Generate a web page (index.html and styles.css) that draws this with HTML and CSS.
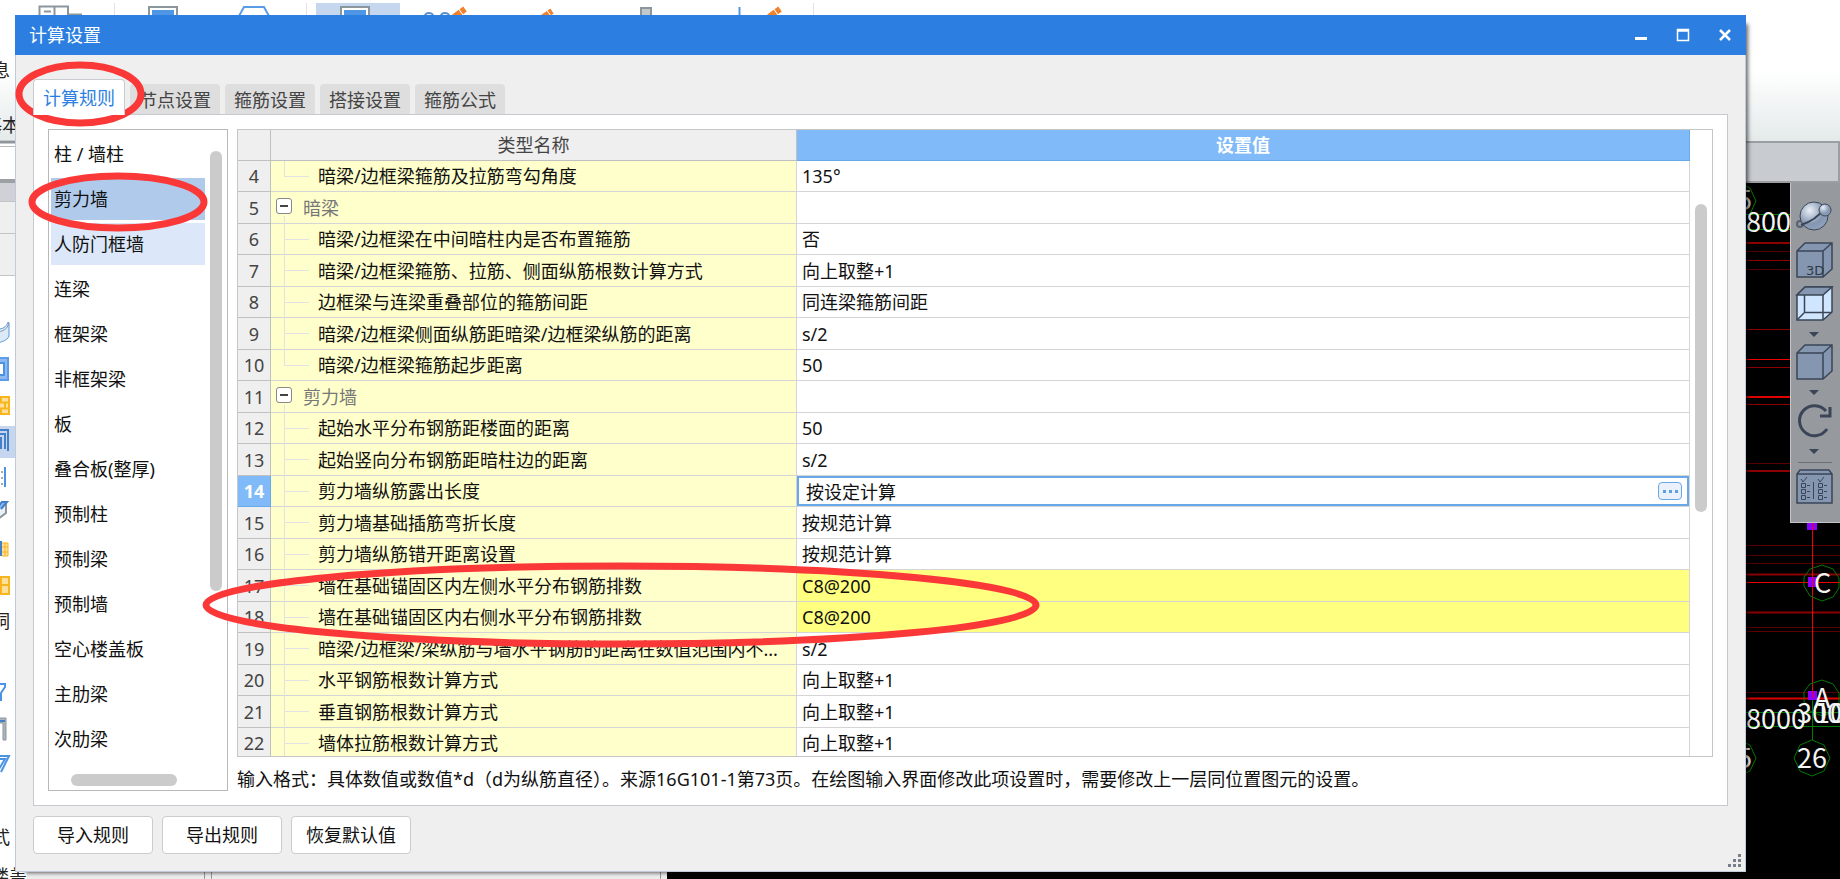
FILE: index.html
```html
<!DOCTYPE html>
<html lang="zh-CN">
<head>
<meta charset="utf-8">
<title>计算设置</title>
<link rel="stylesheet" href="styles.css">
</head>
<body>
<div class="app" aria-hidden="true">
  <div class="app-ribbon"></div>
  <div class="app-bar"></div>
  <div class="app-view"></div>
  <svg class="ribbon-icons" width="840" height="16" viewBox="0 0 840 16">
    <path d="M114.500 3V16M306.500 3V16M813.500 3V16" stroke="#e3e3e3"/>
    <rect x="316" y="3" width="84" height="13" fill="#c5d7ef"/>
    <path d="M39.500 16V6.500H68V16M68 14.500H82M44 11.500H51M54.500 7V16" fill="none" stroke="#8b979c" stroke-width="2"/>
    <path d="M149 16V7H177V16M341 16V7H369V16" fill="#fff" stroke="#8b979c" stroke-width="2"/>
    <path d="M152 10H174V16H152ZM344 10H366V16H344Z" fill="#4f96e6"/>
    <path d="M239 16L244 7H264L269 16" fill="#fff" stroke="#5a9be5" stroke-width="2"/>
    <path d="M425 16a4 3 0 0 1 8 0M441 16a4 3 0 0 1 8 0" fill="none" stroke="#5a8fd0" stroke-width="2"/>
    <path d="M454 17L465 9M542 18L552 11M769 17L780 9" stroke="#f2812c" stroke-width="6" stroke-dasharray="8 1"/>
    <path d="M641 16V8H651V16" fill="#c2c8cb" stroke="#8b979c" stroke-width="2"/>
    <path d="M739.500 7V16" stroke="#4f96e6" stroke-width="2"/>
  </svg>
  <svg class="side-panel" width="30" height="879" viewBox="0 0 30 879">
    <rect y="140" width="30" height="739" fill="#fff"/>
    <path d="M0 142H30" stroke="#8f9699" stroke-width="3"/>
    <path d="M0 146.500H30" stroke="#b8bcbe"/>
    <path d="M0 181H30" stroke="#9da1a5" stroke-width="4"/>
    <rect y="183" width="30" height="18" fill="#d0d0d7"/>
    <rect y="201" width="30" height="74" fill="#efefef"/>
    <path d="M0 201.500H30M0 233.500H30M0 275.500H30" stroke="#c4c4c4"/>
    <path d="M-2 329C5 329 7 325 8 322L9 323V336C8 339 5 341 -2 343Z" fill="#dce9f8" stroke="#5c97d8"/>
    <path d="M-2 332C5 331 8 327 9 323" fill="none" stroke="#8b979c"/>
    <path d="M-2 358H8V380H-2" fill="#8dbaf0" stroke="#5c9ce8" stroke-width="2"/>
    <path d="M-2 363H4V375H-2" fill="#fff" stroke="#4d93e3" stroke-width="2"/>
    <path d="M-2 397H9V414H-2M-2 402.500H9M-2 408.500H9M1 397V402M5 403V408M1 409V414" fill="#ffe09a" stroke="#f8b51e" stroke-width="2"/>
    <rect y="426" width="15" height="32" fill="#c6d6ee"/>
    <path d="M-2 430H8V451M-2 434H5V449M-2 438H1V449" fill="none" stroke="#4380c7" stroke-width="2"/>
    <path d="M5 467V487" stroke="#4d93e3" stroke-width="2"/>
    <path d="M2 471V486" stroke="#4b5866" stroke-dasharray="2 4"/>
    <path d="M-2 508L2 502H6V513L-2 519" fill="#e9f0f8" stroke="#8b979c" stroke-width="2"/>
    <path d="M-2 507L2 502H7L1 509" fill="#8dbaf0" stroke="#4380c7" stroke-width="2"/>
    <path d="M2 543H8V556H2M2 547H8M2 552H8M5 543V556" fill="#ffe09a" stroke="#f8b51e"/>
    <path d="M-2 542H1V556" fill="none" stroke="#4380c7" stroke-width="2"/>
    <path d="M-2 577H9V594H-2M-2 585H9M1 577V594" fill="#ffe09a" stroke="#f8b51e" stroke-width="2"/>
    <path d="M-2 684H5V687L1 693V701" fill="none" stroke="#4d93e3" stroke-width="2"/>
    <path d="M-2 718H6V740H3V723H-2" fill="#aeb5b8" stroke="#8b979c"/>
    <path d="M-2 721H5" stroke="#4380c7" stroke-width="2"/>
    <path d="M-2 756H9L1 772M-2 759H5L-1 769" fill="none" stroke="#4d93e3" stroke-width="2"/>
    <g class="app-text">
      <text x="-8" y="77">息</text>
      <text x="-16" y="132">基本</text>
      <text x="-8" y="628">洞</text>
      <text x="-8" y="844">式</text>
      <text x="-9" y="883">楼盖</text>
    </g>
  </svg>
  <svg class="cad" width="100" height="696" viewBox="1740 183 100 696">
    <path d="M1740 251.500H1790M1740 269.500H1790M1740 463.500H1790M1740 545.500H1840M1740 555.500H1840M1740 563.500H1840M1740 627.500H1840M1740 631.500H1840M1740 692.500H1840" stroke="#590000"/>
    <path d="M1740 243H1790M1740 471H1790M1740 574.500H1840M1740 612.500H1840" stroke="#8c0000" stroke-width="2"/>
    <path d="M1740 260.500H1790M1740 329.500H1790M1740 367.500H1790M1740 404.500H1790" stroke="#8c0000"/>
    <path d="M1740 359.500H1790M1740 582.500H1840" stroke="#f00000"/>
    <path d="M1740 397H1790M1740 698.500H1840" stroke="#e00000" stroke-width="2"/>
    <path d="M1807 523h10v7h-10zM1808 577h9v10h-9zM1808 691h9v9h-9z" fill="#8a00ff"/>
    <path d="M1812.500 523V698" stroke="#f00000"/>
    <g fill="none" stroke="#007a00">
      <path d="M1740 214.500H1790M1740 229.500H1790M1740 712.500H1840M1740 726.500H1840M1812.500 700V740"/>
      <path d="M1822 565L1833 569L1839 578V588L1833 597L1822 601L1810 596L1804 586V577L1810 569Z"/>
      <path d="M1822 680L1833 684L1839 693V703L1833 712L1822 716L1810 711L1804 701V692L1810 684Z"/>
      <path d="M1812 740L1824 745L1830 758L1824 771L1812 776L1800 771L1794 758L1800 745Z"/>
      <path d="M1738 740L1750 745L1756 758L1750 771L1738 776M1738 183L1750 188L1756 201L1750 214"/>
    </g>
    <g class="cad-text">
      <text x="1737" y="210" class="dim">5</text>
      <text x="1746" y="232">800</text>
      <text x="1814" y="593">C</text>
      <text x="1814" y="708">A</text>
      <text x="1746" y="729">8000</text>
      <text x="1797" y="723">300</text>
      <text x="1815" y="723">100</text>
      <text x="1737" y="768">5</text>
      <text x="1797" y="768">26</text>
    </g>
  </svg>
  <div class="view-tools">
    <svg width="49" height="339" viewBox="1791 183 49 339">
      <defs>
        <radialGradient id="ball" cx="0.350" cy="0.300" r="0.700"><stop offset="0" stop-color="#eaf0f8"/><stop offset="0.700" stop-color="#8496b0"/><stop offset="1" stop-color="#8fa1ba"/></radialGradient>
      </defs>
      <g stroke="#3a4657" fill="#8496b0">
        <circle cx="1800" cy="224" r="3" fill="none" stroke="#5a6270" stroke-width="2"/>
        <circle cx="1814" cy="216" r="14" fill="url(#ball)"/>
        <path d="M1801 225C1810 222 1819 216 1824 209" fill="none" stroke-width="2"/>
        <circle cx="1825" cy="210" r="6" fill="url(#ball)"/>
        <g stroke-width="1.500">
          <path d="M1797 251L1805 243H1832V269L1823 277H1797ZM1797 251H1823V277M1823 251L1832 243"/>
          <path d="M1797 295L1805 287H1832V312L1823 320H1797Z" fill="#d0e6ff"/>
          <path d="M1797 295L1805 287H1832L1823 295Z"/>
          <path d="M1823 295V320M1804.500 295V312.500H1832M1797 320L1804 313" fill="none"/>
          <path d="M1797 353L1805 345H1832V371L1823 379H1797ZM1797 353H1823V379M1823 353L1832 345"/>
          <path d="M1797 474L1800 470H1829L1832 474V503H1797ZM1797 474H1832"/>
        </g>
        <path d="M1827 429A15 15 0 1 1 1826 411" fill="none" stroke-width="3"/>
        <path d="M1830 407V416H1820" fill="none" stroke-width="3"/>
        <path d="M1809 332H1819L1814 337ZM1809 390H1819L1814 395ZM1809 449H1819L1814 454Z" fill="#3a4657" stroke="none"/>
        <path d="M1798 462.500H1832" stroke="#6d7072"/>
        <path d="M1801 479L1803 482L1807 477M1818 479L1820 482L1824 477M1813.500 482V499M1801.500 483.500h4v4h-4zM1801.500 489.500h4v4h-4zM1801.500 495.500h4v4h-4zM1818.500 483.500h4v4h-4zM1818.500 489.500h4v4h-4zM1818.500 495.500h4v4h-4zM1807 485.500h3M1807 491.500h3M1807 497.500h3M1824 485.500h3M1824 491.500h3M1824 497.500h3" fill="none"/>
      </g>
      <text x="1806" y="275" class="cube-label">3D</text>
    </svg>
  </div>
  <div class="status-strip"></div>
</div>

<main class="dialog" role="dialog" aria-labelledby="dialog-title">
  <header class="titlebar">
    <h1 class="title" id="dialog-title">计算设置</h1>
    <button class="win-btn" aria-label="最小化"><svg width="14" height="14"><path d="M1 10.500H13" stroke="#fff" stroke-width="3"/></svg></button>
    <button class="win-btn" aria-label="最大化"><svg width="14" height="14"><path d="M1.500 1.500H12.500V12.500H1.500ZM1 3H13" fill="none" stroke="#fff" stroke-width="1.500"/></svg></button>
    <button class="win-btn" aria-label="关闭"><svg width="14" height="14"><path d="M2 2L12 12M12 2L2 12" stroke="#fff" stroke-width="2.500"/></svg></button>
  </header>
  <div class="content">
    <nav class="tabs" role="tablist">
      <button class="tab active" role="tab" aria-selected="true">计算规则</button>
      <button class="tab" role="tab">节点设置</button>
      <button class="tab" role="tab">箍筋设置</button>
      <button class="tab" role="tab">搭接设置</button>
      <button class="tab" role="tab">箍筋公式</button>
    </nav>
    <section class="pane">
      <div class="list">
        <div class="list-body">
          <ul class="items">
            <li class="item">柱 / 墙柱</li>
            <li class="item selected">剪力墙</li>
            <li class="item hover">人防门框墙</li>
            <li class="item">连梁</li>
            <li class="item">框架梁</li>
            <li class="item">非框架梁</li>
            <li class="item">板</li>
            <li class="item">叠合板(整厚)</li>
            <li class="item">预制柱</li>
            <li class="item">预制梁</li>
            <li class="item">预制墙</li>
            <li class="item">空心楼盖板</li>
            <li class="item">主肋梁</li>
            <li class="item">次肋梁</li>
          </ul>
          <div class="list-track"><div class="thumb"></div></div>
        </div>
        <div class="h-track"><div class="thumb"></div></div>
      </div>
      <div class="detail">
        <div class="grid">
          <div class="grid-view">
            <table class="rules">
              <colgroup><col class="col-no"><col class="col-name"><col></colgroup>
              <thead><tr><th></th><th>类型名称</th><th class="current">设置值</th></tr></thead>
              <tbody>
                <tr><th>4</th><td class="name last">暗梁/边框梁箍筋及拉筋弯勾角度</td><td>135°</td></tr>
                <tr><th>5</th><td class="name group"><button class="fold" aria-label="折叠"></button>暗梁</td><td></td></tr>
                <tr><th>6</th><td class="name">暗梁/边框梁在中间暗柱内是否布置箍筋</td><td>否</td></tr>
                <tr><th>7</th><td class="name">暗梁/边框梁箍筋、拉筋、侧面纵筋根数计算方式</td><td>向上取整+1</td></tr>
                <tr><th>8</th><td class="name">边框梁与连梁重叠部位的箍筋间距</td><td>同连梁箍筋间距</td></tr>
                <tr><th>9</th><td class="name">暗梁/边框梁侧面纵筋距暗梁/边框梁纵筋的距离</td><td>s/2</td></tr>
                <tr><th>10</th><td class="name last">暗梁/边框梁箍筋起步距离</td><td>50</td></tr>
                <tr><th>11</th><td class="name group"><button class="fold" aria-label="折叠"></button>剪力墙</td><td></td></tr>
                <tr><th>12</th><td class="name">起始水平分布钢筋距楼面的距离</td><td>50</td></tr>
                <tr><th>13</th><td class="name">起始竖向分布钢筋距暗柱边的距离</td><td>s/2</td></tr>
                <tr><th class="current">14</th><td class="name">剪力墙纵筋露出长度</td><td class="editing"><div class="editor"><input class="edit" aria-label="剪力墙纵筋露出长度" value="按设定计算"><button class="more" aria-label="更多"><svg width="22" height="16"><path d="M4 8.500H7M10 8.500H13M16 8.500H19" stroke="#5c9fe0" stroke-width="3"/></svg></button></div></td></tr>
                <tr><th>15</th><td class="name">剪力墙基础插筋弯折长度</td><td>按规范计算</td></tr>
                <tr><th>16</th><td class="name">剪力墙纵筋错开距离设置</td><td>按规范计算</td></tr>
                <tr><th>17</th><td class="name">墙在基础锚固区内左侧水平分布钢筋排数</td><td class="changed">C8@200</td></tr>
                <tr><th>18</th><td class="name">墙在基础锚固区内右侧水平分布钢筋排数</td><td class="changed">C8@200</td></tr>
                <tr><th>19</th><td class="name">暗梁/边框梁/梁纵筋与墙水平钢筋的距离在数值范围内不...</td><td>s/2</td></tr>
                <tr><th>20</th><td class="name">水平钢筋根数计算方式</td><td>向上取整+1</td></tr>
                <tr><th>21</th><td class="name">垂直钢筋根数计算方式</td><td>向上取整+1</td></tr>
                <tr><th>22</th><td class="name">墙体拉筋根数计算方式</td><td>向上取整+1</td></tr>
              </tbody>
            </table>
          </div>
          <div class="grid-track"><div class="thumb"></div></div>
        </div>
        <p class="note">输入格式：具体数值或数值*d（d为纵筋直径）。来源16G101-1第73页。在绘图输入界面修改此项设置时，需要修改上一层同位置图元的设置。</p>
      </div>
    </section>
    <footer class="actions">
      <button class="action">导入规则</button>
      <button class="action">导出规则</button>
      <button class="action">恢复默认值</button>
    </footer>
  </div>
  <svg class="grip" width="13" height="13"><path d="M10 1.500h3M5 6.500h3M10 6.500h3M0 11.500h3M5 11.500h3M10 11.500h3" stroke="#77818b" stroke-width="3"/></svg>
</main>

<svg class="marks" width="1060" height="660" viewBox="0 0 1060 660" aria-hidden="true">
  <g fill="none" stroke="#fb3838" stroke-width="7">
    <ellipse cx="80" cy="94" rx="61" ry="29"/>
    <ellipse cx="118" cy="202" rx="86" ry="26"/>
    <ellipse cx="621" cy="605" rx="415" ry="39"/>
  </g>
</svg>
</body>
</html>
```

FILE: styles.css
```css
* { box-sizing: border-box; }
html, body { height: 100%; }
body {
  margin: 0;
  overflow: hidden;
  position: relative;
  background: #fff;
  color: #111;
  font: 18px/24px "Noto Sans", "Noto Sans CJK SC", sans-serif;
}
button, input { font: inherit; color: inherit; margin: 0; padding: 0; }
svg { display: block; }

/* Main program window behind the dialog */
.app { position: absolute; inset: 0; display: flex; flex-direction: column; overflow: hidden; }
.app-ribbon { flex: none; height: 141px; background: linear-gradient(#fff 50%, #e4eaea); }
.app-bar { flex: none; height: 42px; background: #c8cbd0; border: 2px solid #9b9fa2; border-left: 0; }
.app-view { flex: 1; background: #000; }
.ribbon-icons, .side-panel { position: absolute; left: 0; top: 0; }
.app-text { font-size: 18px; fill: #222; }
.cad { position: absolute; right: 0; top: 183px; }
.cad-text { font-family: "Noto Sans CJK SC", sans-serif; font-size: 27px; fill: #f4f4f4; }
.dim { fill: #bbb; }
.view-tools {
  position: absolute;
  right: 0;
  top: 183px;
  background: #96999e;
  border-left: 1px solid #c4c6c9;
  border-bottom: 1px solid #c4c6c9;
}
.cube-label { font: 13px "DejaVu Sans", sans-serif; fill: #2e3947; }
.status-strip {
  position: absolute;
  left: 27px;
  bottom: 0;
  width: 640px;
  height: 7px;
  background: linear-gradient(90deg, #eee 177px, #999 177px 178px, #eee 178px 184px, #999 184px 185px, #eee 185px 633px, #999 633px 634px, #eee 634px);
}

/* Dialog */
.dialog {
  position: absolute;
  inset: 15px 94px 7px 15px;
  display: flex;
  flex-direction: column;
  background: #efefef;
  box-shadow: inset 0 0 0 1px #c0cad8, 6px 5px 4px -4px rgba(0, 0, 0, 0.6);
}
.titlebar { display: flex; align-items: center; height: 40px; padding-left: 14px; background: #2c7fe1; color: #fff; }
.title { flex: 1; margin: 0; font-size: 18px; font-weight: 400; }
.win-btn { display: grid; place-items: center; width: 42px; height: 40px; border: 0; background: none; }
.content { flex: 1; min-height: 0; display: flex; flex-direction: column; padding: 24px 18px 18px; }

.tabs { display: flex; align-items: flex-end; gap: 5px; }
.tab { width: 90px; height: 30px; padding-top: 1px; border: 0; border-radius: 4px 4px 0 0; background: #dedede; color: #444; }
.tab.active {
  position: relative;
  z-index: 1;
  width: 92px;
  height: 36px;
  margin-bottom: -1px;
  border: 1px solid #c9ccd0;
  border-bottom: 0;
  background: #fff;
  color: #2c7fe1;
}
.pane { flex: 1; min-height: 0; display: flex; gap: 9px; padding: 14px; border: 1px solid #c6cace; background: #fff; }

.list { width: 180px; display: flex; flex-direction: column; border: 1px solid #b8b8b8; }
.list-body { flex: 1; min-height: 0; display: flex; gap: 5px; padding: 3px 0 0 2px; }
.items { flex: 1; display: flex; flex-direction: column; gap: 3px; margin: 0; padding: 0; list-style: none; overflow: hidden; }
.item { flex: none; height: 42px; padding-left: 3px; line-height: 42px; }
.item.selected { background: #b0caeb; }
.item.hover { background: #dce8f9; }
.list-track { width: 17px; padding-top: 18px; }
.thumb { background: #cbcbcb; border-radius: 6px; }
.list-track .thumb { width: 12px; height: 440px; }
.h-track { height: 17px; padding: 1px 0 4px 22px; }
.h-track .thumb { width: 106px; height: 12px; }

.detail { flex: 1; min-width: 0; display: flex; flex-direction: column; }
.grid { flex: 1; min-height: 0; display: flex; border: 1px solid #c6c6c6; }
.grid-view { flex: 1; overflow: hidden; }
.grid-track { width: 22px; padding: 74px 5px 0; }
.grid-track .thumb { height: 308px; }
.note { flex: none; height: 34px; margin: 0; padding-top: 10px; line-height: 24px; white-space: nowrap; }

.rules { width: 100%; border-collapse: separate; border-spacing: 0; table-layout: fixed; }
.col-no { width: 33px; }
.col-name { width: 526px; }
.rules th, .rules td {
  height: 31px;
  padding: 0 0 0 5px;
  line-height: 22px;
  white-space: nowrap;
  text-align: left;
  border: solid #d5d5d5;
  border-width: 0 1px 1px 0;
}
.rules tbody tr:nth-child(even) > * { height: 32px; }
.rules th { padding: 0; text-align: center; font-weight: 400; color: #444; background: #efefef; border-color: #c0c0c0; }
.rules th.current { background: #80baf9; color: #fff; border-color: #68a9e8; font-weight: 700; }
.rules .name { position: relative; padding-left: 47px; background: #ffffcb; }
.name::before, .name::after { content: ""; position: absolute; left: 13px; background: #e2e2e2; }
.name::before { top: 0; bottom: -1px; width: 1px; }
.name::after { top: 15px; width: 25px; height: 1px; }
.name.last::before { bottom: 15px; }
.name.group::before { top: 24px; }
.name.group::after { content: none; }
.rules .name.group { padding-left: 32px; color: #777; }
.fold {
  position: absolute;
  left: 5px;
  top: 6px;
  width: 16px;
  height: 16px;
  border: 1px solid #888;
  border-radius: 3px;
  background: linear-gradient(#444, #444) center / 8px 2px no-repeat #fff;
}
.rules .changed { background: #ffff80; }
.rules .editing { padding: 0; }
.editor { display: flex; align-items: center; height: 30px; padding: 0 5px 0 7px; border: 2px solid #69a8e8; }
.edit { flex: 1; min-width: 0; height: 24px; border: 0; outline: 0; background: none; }
.more { width: 24px; height: 18px; border: 1px solid #69a8e8; border-radius: 4px; background: #eaf1fa; overflow: hidden; }

.actions { display: flex; gap: 9px; padding-top: 10px; }
.action { width: 120px; height: 38px; border: 1px solid #ccc; border-radius: 4px; background: #fff; }
.grip { position: absolute; right: 5px; bottom: 5px; }

/* Hand-drawn review marks lie over the whole window */
.marks { position: absolute; left: 0; top: 0; pointer-events: none; }
```
